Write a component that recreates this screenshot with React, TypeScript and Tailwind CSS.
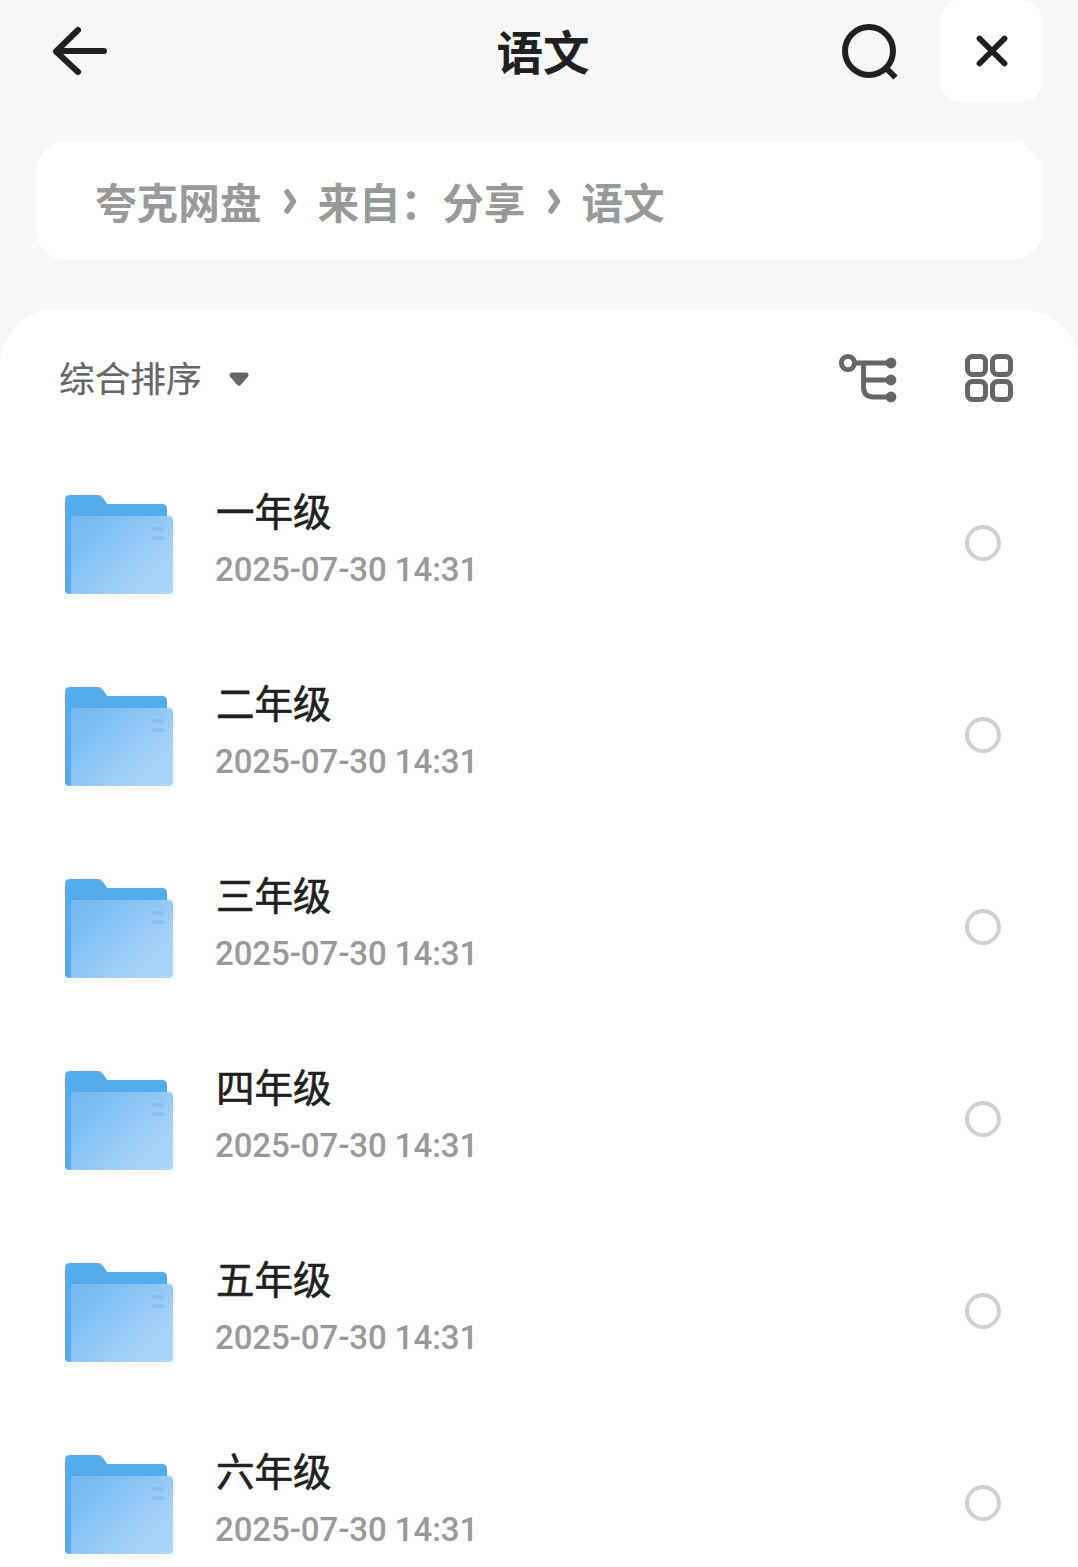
const folders = ['一年级', '二年级', '三年级', '四年级', '五年级', '六年级'];

function BackIcon() {
  return (
    <svg width="60" height="56" viewBox="0 0 60 56" fill="none" stroke="#202020" strokeWidth="6" strokeLinecap="round" strokeLinejoin="round">
      <path d="M28 7 6 28.500 28 49M7 28H54" />
    </svg>
  );
}

function SearchIcon() {
  return (
    <svg width="60" height="60" viewBox="0 0 60 60" fill="none" stroke="#202020" strokeWidth="6">
      <circle cx="30" cy="30" r="24" />
      <path d="m47 47 9.500 9.500" />
    </svg>
  );
}

function CloseIcon() {
  return (
    <svg width="34" height="32" viewBox="0 0 34 32" fill="none" stroke="#202020" strokeWidth="5.800" strokeLinecap="round">
      <path d="m5.500 3.500 25 25M30.500 3.500l-25 25" />
    </svg>
  );
}

function Chevron() {
  return (
    <svg width="14" height="26" viewBox="0 0 14 26" fill="none" stroke="#999" strokeWidth="5.500" strokeLinecap="round" strokeLinejoin="round">
      <path d="M4 4 10.500 13.500 4 23" />
    </svg>
  );
}

function TreeIcon() {
  return (
    <svg width="58" height="50" viewBox="0 0 58 50" fill="none" stroke="#666" strokeWidth="4.800">
      <circle cx="9" cy="10" r="6.600" strokeWidth="4.900" />
      <path d="M16 10H52M24.500 10V34Q24.500 44 34.500 44H52M24 27H52" />
      <g fill="#666" stroke="none">
        <circle cx="52" cy="10" r="5.400" />
        <circle cx="52" cy="27" r="5.400" />
        <circle cx="52" cy="44" r="5.400" />
      </g>
    </svg>
  );
}

function GridIcon() {
  return (
    <svg width="48" height="48" viewBox="0 0 48 48" fill="none" stroke="#666" strokeWidth="5">
      <rect x="2.500" y="2.500" width="18" height="18" rx="5" />
      <rect x="27.500" y="2.500" width="18" height="18" rx="5" />
      <rect x="2.500" y="27.500" width="18" height="18" rx="5" />
      <rect x="27.500" y="27.500" width="18" height="18" rx="5" />
    </svg>
  );
}

function FolderIcon() {
  return (
    <svg className="mt-[2px]" width="108" height="100" viewBox="0 0 108 100">
      <defs>
        <linearGradient id="front" x1="0" y1="0.100" x2="1" y2="0.900">
          <stop offset="0" stopColor="#77baf0" />
          <stop offset="0.250" stopColor="#7fc0f3" />
          <stop offset="0.800" stopColor="#a6d2f8" />
          <stop offset="1" stopColor="#abd5fa" />
        </linearGradient>
      </defs>
      <path d="M0 5Q0 0 5 0H33Q36 0 38 3L42 9H97Q102 9 102 14V99H4Q0 99 0 95Z" fill="#54abed" />
      <path d="M6 24Q6 21 9 21H104Q108 21 108 25V95Q108 99 104 99H6Z" fill="url(#front)" />
      <path d="M87 34H99M87 43H99" stroke="#87bff0" strokeWidth="3.500" />
    </svg>
  );
}

function FolderRow({ name }: { name: string }) {
  return (
    <li className="flex h-[192px] shrink-0 items-center pr-[77px] pl-[65px]">
      <FolderIcon />
      <div className="mb-[12px] ml-[42px] flex flex-1 flex-col">
        <span className="ml-px text-[38.500px] leading-[56px] font-normal text-[#202020] [-webkit-text-stroke:0.600px_#202020]">{name}</span>
        <span className="mt-[7px] font-[Roboto] text-[33px] leading-[52px] font-medium tracking-[-0.080px] text-[#999]">2025-07-30 14:31</span>
      </div>
      <span className="mb-[2px] size-[36px] rounded-full border-4 border-[#d0d0d0]" />
    </li>
  );
}

export default function App() {
  return (
    <div className="flex h-[1567px] w-[1078px] flex-col overflow-hidden bg-[#f7f7f7] font-['Noto_Sans_CJK_SC',sans-serif]">
      <header className="grid h-[102px] shrink-0 grid-cols-[1fr_auto_1fr] items-center pr-[36px] pl-[50px]">
        <BackIcon />
        <h1 className="mr-[6px] mb-[2px] text-[46.500px] leading-[60px] font-bold text-[#202020]">语文</h1>
        <div className="flex items-center justify-end gap-[41px]">
          <SearchIcon />
          <button className="flex size-[102px] items-center justify-center rounded-[20px] bg-white">
            <CloseIcon />
          </button>
        </div>
      </header>
      <nav className="mx-[36px] mt-[40px] flex h-[118px] shrink-0 items-center rounded-[30px] bg-white pb-px pl-[59px] text-[41.600px] leading-[60px] font-bold text-[#999]">
        <span>夸克网盘</span>
        <span className="mr-[20px] ml-[22px]"><Chevron /></span>
        <span>来自：分享</span>
        <span className="mr-[20px] ml-[22px]"><Chevron /></span>
        <span>语文</span>
      </nav>
      <div className="mt-[50px] flex flex-1 flex-col bg-[#f5f7f9]">
        <main className="flex flex-1 flex-col rounded-t-[54px] bg-white">
          <div className="flex h-[138px] shrink-0 items-center pr-[65px] pb-[2px] pl-[59px]">
            <span className="mb-[2px] text-[35.700px] leading-[50px] text-[#666] [-webkit-text-stroke:0.200px_#666]">综合排序</span>
            <svg className="mt-[2px] ml-[26px]" width="22" height="16" viewBox="0 0 22 16">
              <path d="M4 4H18L11 12Z" fill="#666" stroke="#666" strokeWidth="5" strokeLinejoin="round" />
            </svg>
            <div className="ml-auto flex items-center gap-[68px]">
              <TreeIcon />
              <GridIcon />
            </div>
          </div>
          <ul className="flex flex-col">
            {folders.map((name) => (
              <FolderRow key={name} name={name} />
            ))}
          </ul>
        </main>
      </div>
    </div>
  );
}
